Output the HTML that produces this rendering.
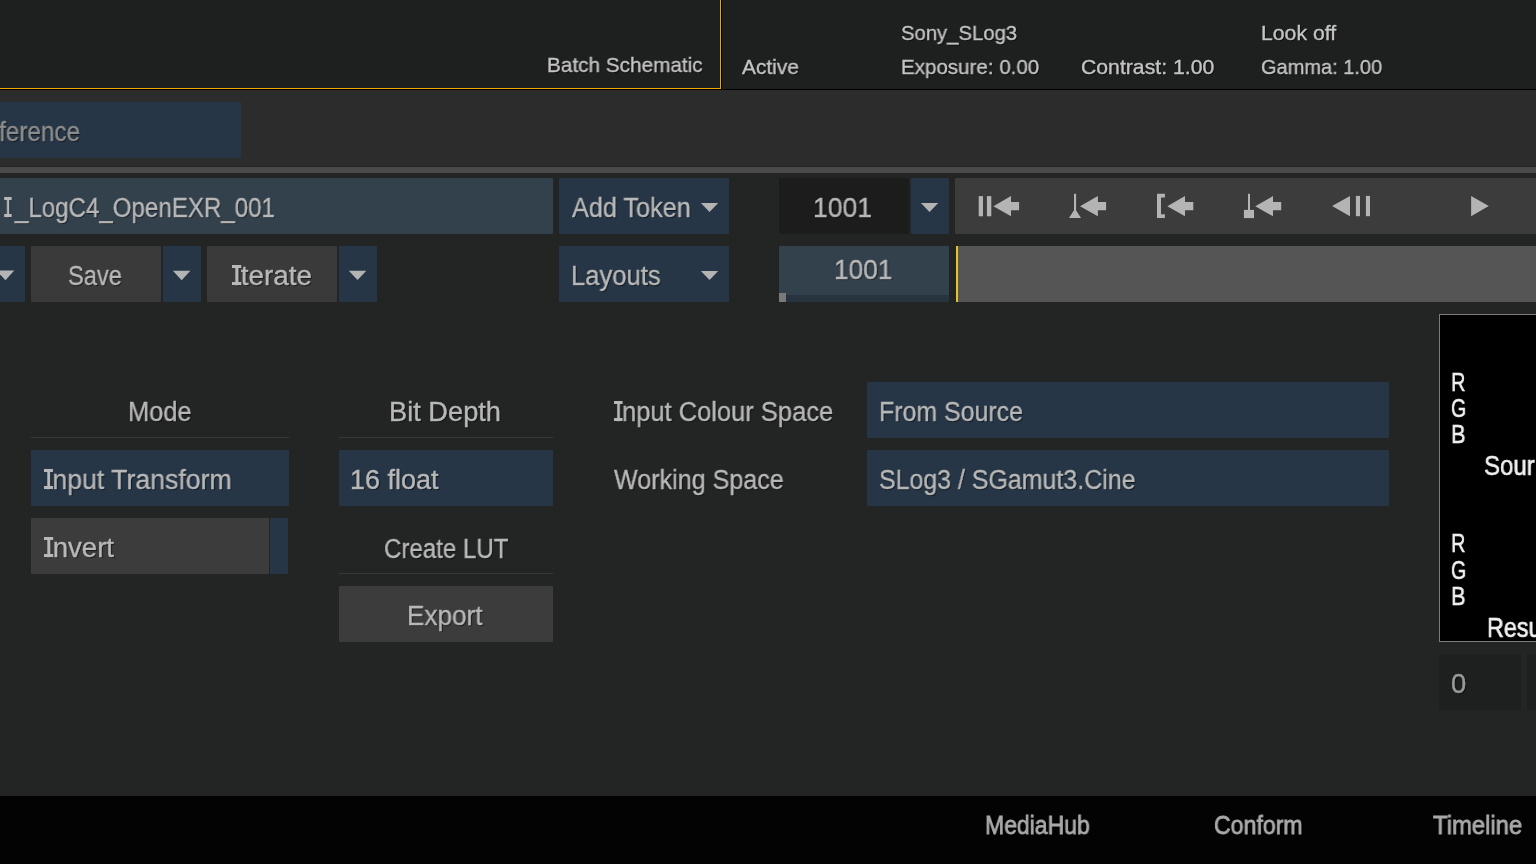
<!DOCTYPE html>
<html><head><meta charset="utf-8"><style>

html,body{margin:0;padding:0;width:1536px;height:864px;overflow:hidden;background:#222;}
#root{position:relative;width:1536px;height:864px;overflow:hidden;font-family:'Liberation Sans', sans-serif;}
#root div{position:absolute;}
#root span{position:absolute;white-space:pre;transform-origin:0 0;-webkit-text-stroke:0.35px currentColor;will-change:transform;}
#root span i{position:relative;font-style:normal;}
#root span i::before,#root span i::after{content:'';position:absolute;left:-0.6px;width:8.2px;height:2.6px;background:currentColor;}
#root span i::before{top:4.4px;}
#root span i::after{top:21px;}
svg{position:absolute;left:0;top:0;}

</style></head><body><div id="root">
<div style="left:0px;top:0px;width:1536px;height:89px;background:#1e1f1f;border-radius:0px;"></div>
<div style="left:0px;top:88px;width:721px;height:1px;background:#eea800;border-radius:0px;"></div>
<div style="left:720px;top:0px;width:1px;height:89px;background:#eea800;border-radius:0px;"></div>
<div style="left:721px;top:0px;width:1px;height:89px;background:#000;border-radius:0px;"></div>
<div style="left:0px;top:89px;width:1536px;height:1px;background:#000;border-radius:0px;"></div>
<div style="left:0px;top:90px;width:1536px;height:76px;background:#2c2c2c;border-radius:0px;"></div>
<div style="left:0px;top:166px;width:1536px;height:1px;background:#232323;border-radius:0px;"></div>
<div style="left:0px;top:167px;width:1536px;height:6px;background:#4a4a4a;border-radius:0px;"></div>
<div style="left:0px;top:173px;width:1536px;height:623px;background:#232524;border-radius:0px;"></div>
<div style="left:0px;top:796px;width:1536px;height:68px;background:#030303;border-radius:0px;"></div>
<div style="left:-4px;top:102px;width:245px;height:56px;background:#263646;border-radius:1px;"></div>
<div style="left:-4px;top:178px;width:557px;height:56px;background:#33414d;border-radius:1px;"></div>
<div style="left:559px;top:178px;width:170px;height:56px;background:#263646;border-radius:1px;"></div>
<div style="left:779px;top:178px;width:130px;height:56px;background:#1c1c1c;border-radius:1px;"></div>
<div style="left:911px;top:178px;width:38px;height:56px;background:#263646;border-radius:1px;"></div>
<div style="left:955px;top:178px;width:600px;height:56px;background:#3c3c3c;border-radius:1px;"></div>
<div style="left:-4px;top:246px;width:29px;height:56px;background:#263646;border-radius:1px;"></div>
<div style="left:31px;top:246px;width:130px;height:56px;background:#3a3a3a;border-radius:1px;"></div>
<div style="left:163px;top:246px;width:38px;height:56px;background:#263646;border-radius:1px;"></div>
<div style="left:207px;top:246px;width:130px;height:56px;background:#3a3a3a;border-radius:1px;"></div>
<div style="left:339px;top:246px;width:38px;height:56px;background:#263646;border-radius:1px;"></div>
<div style="left:559px;top:246px;width:170px;height:56px;background:#263646;border-radius:1px;"></div>
<div style="left:779px;top:246px;width:170px;height:56px;background:#33414d;border-radius:1px;"></div>
<div style="left:779px;top:295px;width:170px;height:7px;background:#27333e;border-radius:0px;"></div>
<div style="left:779px;top:293px;width:7px;height:9px;background:#7a7a7a;border-radius:0px;"></div>
<div style="left:956px;top:246px;width:2px;height:56px;background:#e2c32a;border-radius:0px;"></div>
<div style="left:958px;top:246px;width:600px;height:56px;background:#555555;border-radius:0px;"></div>
<div style="left:31px;top:437px;width:258px;height:1px;background:#383838;border-radius:0px;"></div>
<div style="left:31px;top:450px;width:258px;height:56px;background:#263646;border-radius:1px;"></div>
<div style="left:31px;top:518px;width:238px;height:56px;background:#3c3c3c;border-radius:1px;"></div>
<div style="left:270px;top:518px;width:18px;height:56px;background:#263646;border-radius:1px;"></div>
<div style="left:339px;top:437px;width:214px;height:1px;background:#383838;border-radius:0px;"></div>
<div style="left:339px;top:450px;width:214px;height:56px;background:#263646;border-radius:1px;"></div>
<div style="left:339px;top:573px;width:214px;height:1px;background:#383838;border-radius:0px;"></div>
<div style="left:339px;top:586px;width:214px;height:56px;background:#3c3c3c;border-radius:1px;"></div>
<div style="left:867px;top:382px;width:522px;height:56px;background:#263646;border-radius:1px;"></div>
<div style="left:867px;top:450px;width:522px;height:56px;background:#263646;border-radius:1px;"></div>
<div style="left:1439px;top:314px;width:200px;height:328px;background:#000;border-radius:0px;box-shadow: inset 1px 1px 0 #7c7c7c, inset 0 -1px 0 #7c7c7c;"></div>
<div style="left:1439px;top:654px;width:82px;height:56px;background:#1e1f1f;border-radius:1px;"></div>
<div style="left:1527px;top:654px;width:82px;height:56px;background:#1e1f1f;border-radius:1px;"></div>
<svg width="1536" height="864" viewBox="0 0 1536 864">
<polygon points="-3.5,270.4 14.3,270.4 5.4,280.2" fill="#b4b4b4"/>
<polygon points="172.9,270.8 190.4,270.8 181.65,280.2" fill="#b4b4b4"/>
<polygon points="348.8,270.8 366.3,270.8 357.55,280.1" fill="#b4b4b4"/>
<polygon points="700.9,202.9 718.2,202.9 709.55,212.1" fill="#b4b4b4"/>
<polygon points="700.9,270.9 718.2,270.9 709.55,280.1" fill="#b4b4b4"/>
<polygon points="920.9,202.9 938.2,202.9 929.55,212.1" fill="#b4b4b4"/>
<rect x="978.7" y="196.1" width="4.3" height="20.2" fill="#b4b4b4"/>
<rect x="986.9" y="196.1" width="4.4" height="20.2" fill="#b4b4b4"/>
<polygon points="993.4,206.2 1011,196.1 1011,202 1019.1,202 1019.1,210.3 1011,210.3 1011,216.3" fill="#b4b4b4"/>
<rect x="1074" y="193.8" width="2.1" height="18" fill="#b4b4b4"/>
<polygon points="1073.6,210.7 1076.4,210.7 1081,218.1 1069,218.1" fill="#b4b4b4"/>
<polygon points="1080,206.2 1097.9,196.1 1097.9,202 1106.1,202 1106.1,210.3 1097.9,210.3 1097.9,216.3" fill="#b4b4b4"/>
<path d="M1157 193.8 H1164.9 V197.6 H1161 V214.3 H1164.9 V218.1 H1157 Z" fill="#b4b4b4"/>
<polygon points="1167.3,206.2 1185,196.1 1185,202 1193.3,202 1193.3,210.3 1185,210.3 1185,216.3" fill="#b4b4b4"/>
<rect x="1248" y="193.8" width="2" height="17" fill="#b4b4b4"/>
<rect x="1243.9" y="209.9" width="10.1" height="8.2" fill="#b4b4b4"/>
<polygon points="1255.2,206.2 1273,196.1 1273,202 1281.2,202 1281.2,210.3 1273,210.3 1273,216.3" fill="#b4b4b4"/>
<polygon points="1332.1,206 1350,195.9 1350,216.2" fill="#b4b4b4"/>
<rect x="1355.9" y="195.9" width="4.1" height="20.3" fill="#b4b4b4"/>
<rect x="1365.9" y="195.9" width="4.1" height="20.3" fill="#b4b4b4"/>
<polygon points="1471.1,195.9 1488.8,206 1471.1,216.2" fill="#b4b4b4"/>
</svg>
<span style="left:547.21px;top:53.60px;font-size:21px;line-height:21px;font-weight:400;color:#c4c4c4;transform:scaleX(0.9878);text-shadow:1px 1px 1px rgba(0,0,0,0.6);">Batch Schematic</span>
<span style="left:741.60px;top:55.80px;font-size:21px;line-height:21px;font-weight:400;color:#c4c4c4;transform:scaleX(0.9947);text-shadow:1px 1px 1px rgba(0,0,0,0.6);">Active</span>
<span style="left:900.73px;top:22.00px;font-size:21px;line-height:21px;font-weight:400;color:#c4c4c4;transform:scaleX(0.9655);text-shadow:1px 1px 1px rgba(0,0,0,0.6);">Sony_SLog3</span>
<span style="left:901.22px;top:56.00px;font-size:21px;line-height:21px;font-weight:400;color:#c4c4c4;transform:scaleX(0.9786);text-shadow:1px 1px 1px rgba(0,0,0,0.6);">Exposure: 0.00</span>
<span style="left:1080.69px;top:56.00px;font-size:21px;line-height:21px;font-weight:400;color:#c4c4c4;transform:scaleX(1.0100);text-shadow:1px 1px 1px rgba(0,0,0,0.6);">Contrast: 1.00</span>
<span style="left:1260.89px;top:22.00px;font-size:21px;line-height:21px;font-weight:400;color:#c4c4c4;transform:scaleX(1.0108);text-shadow:1px 1px 1px rgba(0,0,0,0.6);">Look off</span>
<span style="left:1260.95px;top:56.00px;font-size:21px;line-height:21px;font-weight:400;color:#c4c4c4;transform:scaleX(0.9532);text-shadow:1px 1px 1px rgba(0,0,0,0.6);">Gamma: 1.00</span>
<span style="left:4.52px;top:195.00px;font-size:27px;line-height:27px;font-weight:400;color:#b8b8b8;transform:scaleX(0.8222);text-shadow:1px 1px 1px rgba(0,0,0,0.6);"><i>I</i></span>
<span style="left:14.99px;top:195.00px;font-size:27px;line-height:27px;font-weight:400;color:#b8b8b8;transform:scaleX(0.8924);text-shadow:1px 1px 1px rgba(0,0,0,0.6);">_LogC4_OpenEXR_001</span>
<span style="left:571.60px;top:195.20px;font-size:27px;line-height:27px;font-weight:400;color:#b8b8b8;transform:scaleX(0.9349);text-shadow:1px 1px 1px rgba(0,0,0,0.6);">Add Token</span>
<span style="left:813.43px;top:195.30px;font-size:27px;line-height:27px;font-weight:400;color:#b8b8b8;transform:scaleX(0.9842);text-shadow:1px 1px 1px rgba(0,0,0,0.6);">1001</span>
<span style="left:68.02px;top:262.80px;font-size:27px;line-height:27px;font-weight:400;color:#b8b8b8;transform:scaleX(0.8767);text-shadow:1px 1px 1px rgba(0,0,0,0.6);">Save</span>
<span style="left:233.23px;top:263.00px;font-size:27px;line-height:27px;font-weight:400;color:#b8b8b8;transform:scaleX(1.0325);text-shadow:1px 1px 1px rgba(0,0,0,0.6);"><i>I</i>terate</span>
<span style="left:571.00px;top:263.00px;font-size:27px;line-height:27px;font-weight:400;color:#b8b8b8;transform:scaleX(0.9489);text-shadow:1px 1px 1px rgba(0,0,0,0.6);">Layouts</span>
<span style="left:833.85px;top:257.40px;font-size:27px;line-height:27px;font-weight:400;color:#b8b8b8;transform:scaleX(0.9737);text-shadow:1px 1px 1px rgba(0,0,0,0.6);">1001</span>
<span style="left:127.52px;top:398.90px;font-size:27px;line-height:27px;font-weight:400;color:#b8b8b8;transform:scaleX(0.9415);text-shadow:1px 1px 1px rgba(0,0,0,0.6);">Mode</span>
<span style="left:388.88px;top:398.90px;font-size:27px;line-height:27px;font-weight:400;color:#b8b8b8;transform:scaleX(1.0083);text-shadow:1px 1px 1px rgba(0,0,0,0.6);">Bit Depth</span>
<span style="left:615.24px;top:398.90px;font-size:27px;line-height:27px;font-weight:400;color:#b8b8b8;transform:scaleX(0.9437);text-shadow:1px 1px 1px rgba(0,0,0,0.6);"><i>I</i>nput Colour Space</span>
<span style="left:878.65px;top:399.10px;font-size:27px;line-height:27px;font-weight:400;color:#b8b8b8;transform:scaleX(0.9229);text-shadow:1px 1px 1px rgba(0,0,0,0.6);">From Source</span>
<span style="left:45.29px;top:467.00px;font-size:27px;line-height:27px;font-weight:400;color:#b8b8b8;transform:scaleX(0.9878);text-shadow:1px 1px 1px rgba(0,0,0,0.6);"><i>I</i>nput Transform</span>
<span style="left:350.00px;top:467.00px;font-size:27px;line-height:27px;font-weight:400;color:#b8b8b8;transform:scaleX(0.9989);text-shadow:1px 1px 1px rgba(0,0,0,0.6);">16 float</span>
<span style="left:614.30px;top:467.20px;font-size:27px;line-height:27px;font-weight:400;color:#b8b8b8;transform:scaleX(0.9302);text-shadow:1px 1px 1px rgba(0,0,0,0.6);">Working Space</span>
<span style="left:878.58px;top:466.90px;font-size:27px;line-height:27px;font-weight:400;color:#b8b8b8;transform:scaleX(0.9236);text-shadow:1px 1px 1px rgba(0,0,0,0.6);">SLog3 / SGamut3.Cine</span>
<span style="left:45.32px;top:535.20px;font-size:27px;line-height:27px;font-weight:400;color:#b8b8b8;transform:scaleX(1.0217);text-shadow:1px 1px 1px rgba(0,0,0,0.6);"><i>I</i>nvert</span>
<span style="left:384.21px;top:535.50px;font-size:27px;line-height:27px;font-weight:400;color:#b8b8b8;transform:scaleX(0.8920);text-shadow:1px 1px 1px rgba(0,0,0,0.6);">Create LUT</span>
<span style="left:407.46px;top:602.90px;font-size:27px;line-height:27px;font-weight:400;color:#b8b8b8;transform:scaleX(0.9684);text-shadow:1px 1px 1px rgba(0,0,0,0.6);">Export</span>
<span style="left:1450.98px;top:670.60px;font-size:27px;line-height:27px;font-weight:400;color:#9a9a9a;transform:scaleX(1.0154);text-shadow:1px 1px 1px rgba(0,0,0,0.6);">0</span>
<span style="left:984.93px;top:812.00px;font-size:26px;line-height:26px;font-weight:400;color:#a9a9a9;transform:scaleX(0.8845);text-shadow:1px 1px 1px rgba(0,0,0,0.6);-webkit-text-stroke:0.8px currentColor">MediaHub</span>
<span style="left:1214.11px;top:812.00px;font-size:26px;line-height:26px;font-weight:400;color:#a9a9a9;transform:scaleX(0.8887);text-shadow:1px 1px 1px rgba(0,0,0,0.6);-webkit-text-stroke:0.8px currentColor">Conform</span>
<span style="left:1433.20px;top:812.00px;font-size:26px;line-height:26px;font-weight:400;color:#a9a9a9;transform:scaleX(0.9177);text-shadow:1px 1px 1px rgba(0,0,0,0.6);-webkit-text-stroke:0.8px currentColor">Timeline</span>
<span style="left:-32.10px;top:118.90px;font-size:27px;line-height:27px;font-weight:400;color:#8c8c8c;transform:scaleX(0.9000);text-shadow:1px 1px 1px rgba(0,0,0,0.6);">Reference</span>
<span style="left:1450.76px;top:368.70px;font-size:26px;line-height:26px;font-weight:400;color:#f0f0f0;transform:scaleX(0.7687);text-shadow:none;-webkit-text-stroke:0.6px currentColor">R</span>
<span style="left:1450.55px;top:395.10px;font-size:26px;line-height:26px;font-weight:400;color:#f0f0f0;transform:scaleX(0.7500);text-shadow:none;-webkit-text-stroke:0.6px currentColor">G</span>
<span style="left:1450.61px;top:420.60px;font-size:26px;line-height:26px;font-weight:400;color:#f0f0f0;transform:scaleX(0.8429);text-shadow:none;-webkit-text-stroke:0.6px currentColor">B</span>
<span style="left:1484.01px;top:453.00px;font-size:27px;line-height:27px;font-weight:400;color:#f0f0f0;transform:scaleX(0.8891);text-shadow:none;-webkit-text-stroke:0.6px currentColor">Sour</span>
<span style="left:1450.76px;top:530.40px;font-size:26px;line-height:26px;font-weight:400;color:#f0f0f0;transform:scaleX(0.7687);text-shadow:none;-webkit-text-stroke:0.6px currentColor">R</span>
<span style="left:1450.55px;top:557.00px;font-size:26px;line-height:26px;font-weight:400;color:#f0f0f0;transform:scaleX(0.7500);text-shadow:none;-webkit-text-stroke:0.6px currentColor">G</span>
<span style="left:1450.61px;top:582.50px;font-size:26px;line-height:26px;font-weight:400;color:#f0f0f0;transform:scaleX(0.8429);text-shadow:none;-webkit-text-stroke:0.6px currentColor">B</span>
<span style="left:1487.37px;top:615.00px;font-size:27px;line-height:27px;font-weight:400;color:#f0f0f0;transform:scaleX(0.8644);text-shadow:none;-webkit-text-stroke:0.6px currentColor">Resu</span>
</div></body></html>
